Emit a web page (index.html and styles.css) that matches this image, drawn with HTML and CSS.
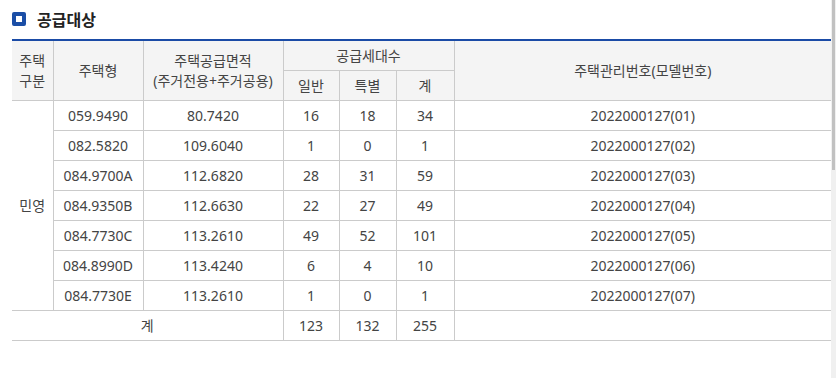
FILE: index.html
```html
<!DOCTYPE html>
<html lang="ko">
<head>
<meta charset="utf-8">
<link rel="stylesheet" href="styles.css">
</head>
<body>
<div class="page">
  <div class="content">
    <h2 class="title"><span class="title-icon"></span>공급대상</h2>
    <table class="supply">
      <colgroup>
        <col class="c1"><col class="c2"><col class="c3"><col class="c4"><col class="c5"><col class="c6"><col>
      </colgroup>
      <thead>
        <tr>
          <th rowspan="2" class="first">주택<br>구분</th>
          <th rowspan="2">주택형</th>
          <th rowspan="2">주택공급면적<br>(주거전용+주거공용)</th>
          <th colspan="3">공급세대수</th>
          <th rowspan="2" class="last">주택관리번호(모델번호)</th>
        </tr>
        <tr>
          <th>일반</th>
          <th>특별</th>
          <th>계</th>
        </tr>
      </thead>
      <tbody>
        <tr><td rowspan="7" class="first">민영</td><td>059.9490</td><td>80.7420</td><td>16</td><td>18</td><td>34</td><td class="last">2022000127(01)</td></tr>
        <tr><td>082.5820</td><td>109.6040</td><td>1</td><td>0</td><td>1</td><td class="last">2022000127(02)</td></tr>
        <tr><td>084.9700A</td><td>112.6820</td><td>28</td><td>31</td><td>59</td><td class="last">2022000127(03)</td></tr>
        <tr><td>084.9350B</td><td>112.6630</td><td>22</td><td>27</td><td>49</td><td class="last">2022000127(04)</td></tr>
        <tr><td>084.7730C</td><td>113.2610</td><td>49</td><td>52</td><td>101</td><td class="last">2022000127(05)</td></tr>
        <tr><td>084.8990D</td><td>113.4240</td><td>6</td><td>4</td><td>10</td><td class="last">2022000127(06)</td></tr>
        <tr><td>084.7730E</td><td>113.2610</td><td>1</td><td>0</td><td>1</td><td class="last">2022000127(07)</td></tr>
        <tr><td colspan="3" class="first">계</td><td>123</td><td>132</td><td>255</td><td class="last"></td></tr>
      </tbody>
    </table>
  </div>
  <div class="scrollbar"><div class="scrollbar-thumb"></div></div>
</div>
</body>
</html>
```

FILE: styles.css
```css
html, body {
  margin: 0;
  padding: 0;
  background: #fff;
}

.page {
  height: 378px;
  overflow: hidden;
  font-family: "Noto Sans", "Noto Sans CJK KR", sans-serif;
  color: #444;
}

.scrollbar {
  position: fixed;
  top: 0;
  right: 0;
  width: 5px;
  height: 100%;
  background: #f0f0f0;
}

.scrollbar-thumb {
  margin-left: 1px;
  width: 3px;
  height: 170px;
  background: #c1c1c1;
}

.content {
  padding: 0 0 0 12px;
}

.title {
  display: flex;
  align-items: center;
  gap: 11px;
  height: 39px;
  margin: 0;
  padding-bottom: 2px;
  box-sizing: border-box;
  font-family: "Noto Sans CJK KR", sans-serif;
  font-size: 16px;
  font-weight: 700;
  color: #222;
}

.title-icon {
  width: 14px;
  height: 14px;
  box-sizing: border-box;
  border: 4px solid #1b4ea6;
  border-radius: 2px;
  background: #fff;
}

.supply {
  width: 819px;
  table-layout: fixed;
  border-collapse: collapse;
  border-top: 2px solid #1a4ba6;
  font-size: 14px;
  text-align: center;
}

.c1 { width: 41px; }
.c2 { width: 90px; }
.c3 { width: 140px; }
.c4 { width: 56px; }
.c5 { width: 57px; }
.c6 { width: 58px; }

.supply th,
.supply td {
  border: 1px solid #cbcbcb;
  padding: 0;
  height: 29px;
  line-height: 20px;
  font-weight: 400;
  color: #444;
}

.supply th {
  background: #f4f4f4;
}

.supply .first {
  border-left: none;
}

.supply .last {
  border-right: none;
}
```
